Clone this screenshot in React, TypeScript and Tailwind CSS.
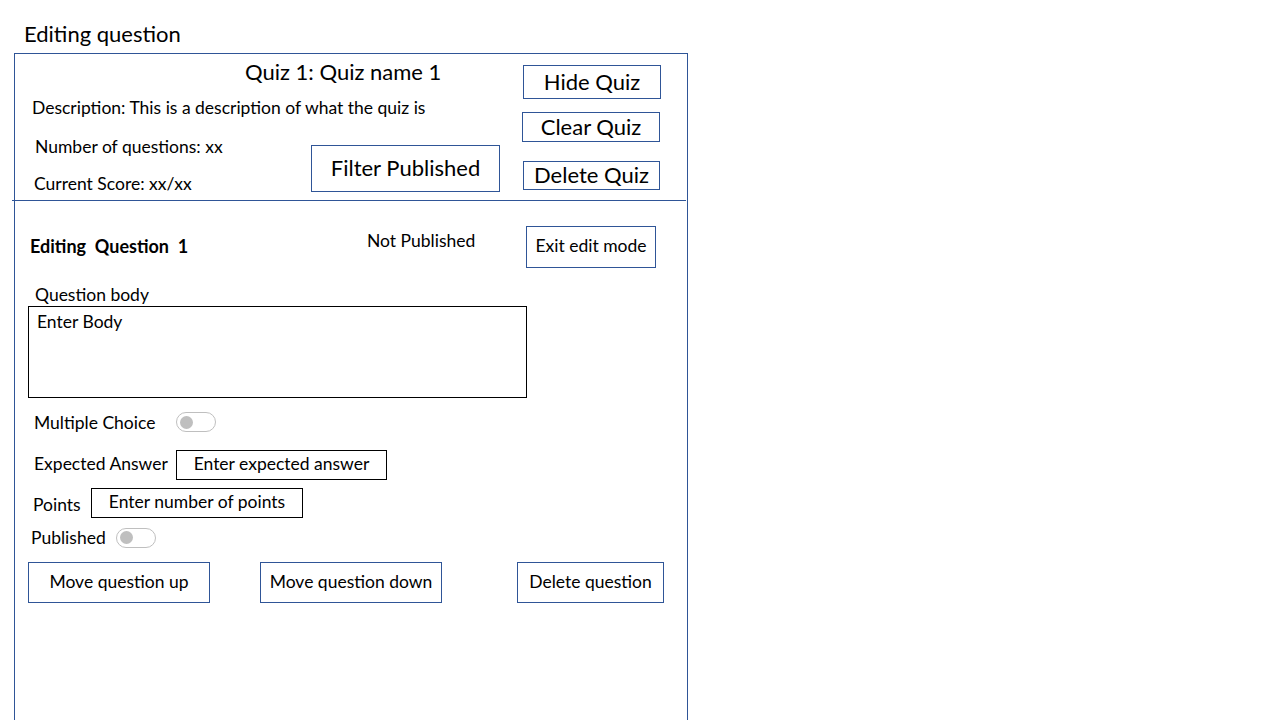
import React from 'react'

const FONT = { fontFamily: '"Lato", "Open Sans", sans-serif' }

function Toggle() {
  return (
    <div className="w-[40px] h-[20px] rounded-full border border-[#bfbfbf] flex items-center pl-[3px]">
      <div className="w-[13px] h-[13px] rounded-full bg-[#bfbfbf]" />
    </div>
  )
}

function BlueBox({ className = '', children }: { className?: string; children: React.ReactNode }) {
  return (
    <div className={`border border-[#2f5597] flex items-center justify-center text-black ${className}`}>
      {children}
    </div>
  )
}

export default function App() {
  return (
    <div className="w-[1280px] h-[720px] bg-white overflow-hidden text-black" style={FONT}>
      <div className="pl-[24px] pt-[21px] h-[53px] text-[22px] leading-[26px]">Editing question</div>

      <div className="ml-[14px] w-[674px] h-[667px] border border-b-0 border-[#2f5597]">
        {/* quiz header */}
        <div className="flex h-[146px]">
          <div className="w-[508px] flex flex-col">
            <div className="ml-[230px] mt-[5px] text-[22px] leading-[26px]">Quiz 1: Quiz name 1</div>
            <div className="ml-[17px] mt-[12px] text-[17.5px] leading-[22px]">
              Description: This is a description of what the quiz is
            </div>
            <div className="flex mt-[5px]">
              <div className="flex flex-col ml-[20px] w-[276px]">
                <div className="mt-[12px] text-[17.5px] leading-[22px]">Number of questions: xx</div>
                <div className="mt-[15px] -ml-[1px] text-[17.5px] leading-[22px]">Current Score: xx/xx</div>
              </div>
              <BlueBox className="mt-[21px] w-[189px] h-[47px] pb-[2px] text-[22px]">Filter Published</BlueBox>
            </div>
          </div>
          <div className="flex flex-col">
            <BlueBox className="mt-[11px] w-[138px] h-[34px] pb-[2px] text-[22px]">Hide Quiz</BlueBox>
            <BlueBox className="mt-[13px] -ml-[1px] w-[138px] h-[30px] pb-[2px] text-[22px]">Clear Quiz</BlueBox>
            <BlueBox className="mt-[19px] w-[137px] h-[29px] pb-[2px] text-[22px]">Delete Quiz</BlueBox>
          </div>
        </div>
        <div className="-ml-[3px] w-[674px] h-px bg-[#2f5597]" />

        {/* question editor */}
        <div className="flex flex-col">
          <div className="flex items-start mt-[25px]">
            <div className="ml-[15px] mt-[9px] w-[337px] text-[18px] leading-[22px] font-bold">
              Editing&nbsp; Question&nbsp; 1
            </div>
            <div className="mt-[4px] w-[159px] text-[17.5px] leading-[22px]">Not Published</div>
            <BlueBox className="w-[130px] h-[42px] pb-[2px] text-[17.5px]">Exit edit mode</BlueBox>
          </div>

          <div className="ml-[20px] mt-[16px] text-[17.5px] leading-[22px]">Question body</div>
          <div className="ml-[13px] w-[499px] h-[92px] border border-black px-[8px] pt-[4px] text-[17.5px] leading-[22px]">
            Enter Body
          </div>

          <div className="flex items-center ml-[19px] mt-[14px] h-[20px]">
            <div className="w-[142px] text-[17.5px] leading-[22px] mt-[1px]">Multiple Choice</div>
            <Toggle />
          </div>

          <div className="flex items-center ml-[19px] mt-[18px]">
            <div className="w-[142px] text-[17.5px] leading-[22px] -mt-[2px]">Expected Answer</div>
            <div className="w-[211px] h-[30px] border border-black flex items-center justify-center pb-[2px] text-[17.5px]">
              Enter expected answer
            </div>
          </div>

          <div className="flex items-center ml-[18px] mt-[8px]">
            <div className="w-[58px] text-[17.5px] leading-[22px] mt-[4px]">Points</div>
            <div className="w-[212px] h-[30px] border border-black flex items-center justify-center pb-[2px] text-[17.5px]">
              Enter number of points
            </div>
          </div>

          <div className="flex items-center ml-[16px] mt-[9px] h-[21px]">
            <div className="w-[85px] text-[17.5px] leading-[22px] mt-[1px]">Published</div>
            <Toggle />
          </div>

          <div className="flex mt-[14px] ml-[13px]">
            <BlueBox className="w-[182px] h-[41px] text-[17.5px]">Move question up</BlueBox>
            <BlueBox className="ml-[50px] w-[182px] h-[41px] text-[17.5px]">Move question down</BlueBox>
            <BlueBox className="ml-[75px] w-[147px] h-[41px] text-[17.5px]">Delete question</BlueBox>
          </div>
        </div>
      </div>
    </div>
  )
}
